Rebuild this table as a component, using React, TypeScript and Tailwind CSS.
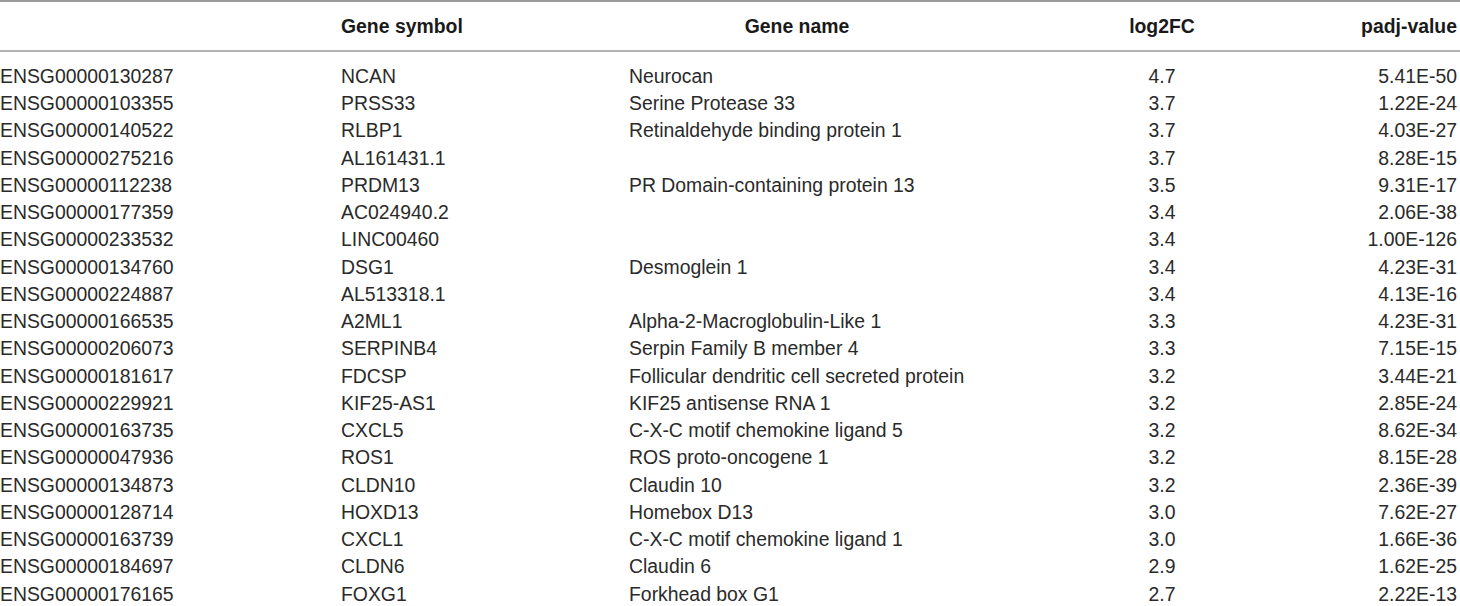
import React from "react";

const rows: [string, string, string, string, string][] = [
  ["ENSG00000130287", "NCAN", "Neurocan", "4.7", "5.41E-50"],
  ["ENSG00000103355", "PRSS33", "Serine Protease 33", "3.7", "1.22E-24"],
  ["ENSG00000140522", "RLBP1", "Retinaldehyde binding protein 1", "3.7", "4.03E-27"],
  ["ENSG00000275216", "AL161431.1", "", "3.7", "8.28E-15"],
  ["ENSG00000112238", "PRDM13", "PR Domain-containing protein 13", "3.5", "9.31E-17"],
  ["ENSG00000177359", "AC024940.2", "", "3.4", "2.06E-38"],
  ["ENSG00000233532", "LINC00460", "", "3.4", "1.00E-126"],
  ["ENSG00000134760", "DSG1", "Desmoglein 1", "3.4", "4.23E-31"],
  ["ENSG00000224887", "AL513318.1", "", "3.4", "4.13E-16"],
  ["ENSG00000166535", "A2ML1", "Alpha-2-Macroglobulin-Like 1", "3.3", "4.23E-31"],
  ["ENSG00000206073", "SERPINB4", "Serpin Family B member 4", "3.3", "7.15E-15"],
  ["ENSG00000181617", "FDCSP", "Follicular dendritic cell secreted protein", "3.2", "3.44E-21"],
  ["ENSG00000229921", "KIF25-AS1", "KIF25 antisense RNA 1", "3.2", "2.85E-24"],
  ["ENSG00000163735", "CXCL5", "C-X-C motif chemokine ligand 5", "3.2", "8.62E-34"],
  ["ENSG00000047936", "ROS1", "ROS proto-oncogene 1", "3.2", "8.15E-28"],
  ["ENSG00000134873", "CLDN10", "Claudin 10", "3.2", "2.36E-39"],
  ["ENSG00000128714", "HOXD13", "Homebox D13", "3.0", "7.62E-27"],
  ["ENSG00000163739", "CXCL1", "C-X-C motif chemokine ligand 1", "3.0", "1.66E-36"],
  ["ENSG00000184697", "CLDN6", "Claudin 6", "2.9", "1.62E-25"],
  ["ENSG00000176165", "FOXG1", "Forkhead box G1", "2.7", "2.22E-13"],
];

const grid = "grid grid-cols-[341px_288px_336px_394px_1fr] items-center";

export default function App() {
  return (
    <div className="w-[1460px] h-[606px] overflow-hidden bg-white text-[#2a2a2a] font-['Liberation_Sans',Arial,sans-serif] text-[19.4px]">
      <div className={`${grid} h-[52px] pt-[1px] border-t-2 border-b-2 border-t-[#9a9a9a] border-b-[#b3b3b3] font-bold text-[#1a1a1a]`}>
        <div />
        <div>Gene symbol</div>
        <div className="text-center">Gene name</div>
        <div className="text-center">log2FC</div>
        <div className="text-right pr-[3px]">padj-value</div>
      </div>
      <div className="pt-[11px]">
        {rows.map((r) => (
          <div key={r[0]} className={`${grid} h-[27.26px] leading-none`}>
            <div>{r[0]}</div>
            <div>{r[1]}</div>
            <div>{r[2]}</div>
            <div className="text-center">{r[3]}</div>
            <div className="text-right pr-[3px]">{r[4]}</div>
          </div>
        ))}
      </div>
    </div>
  );
}
